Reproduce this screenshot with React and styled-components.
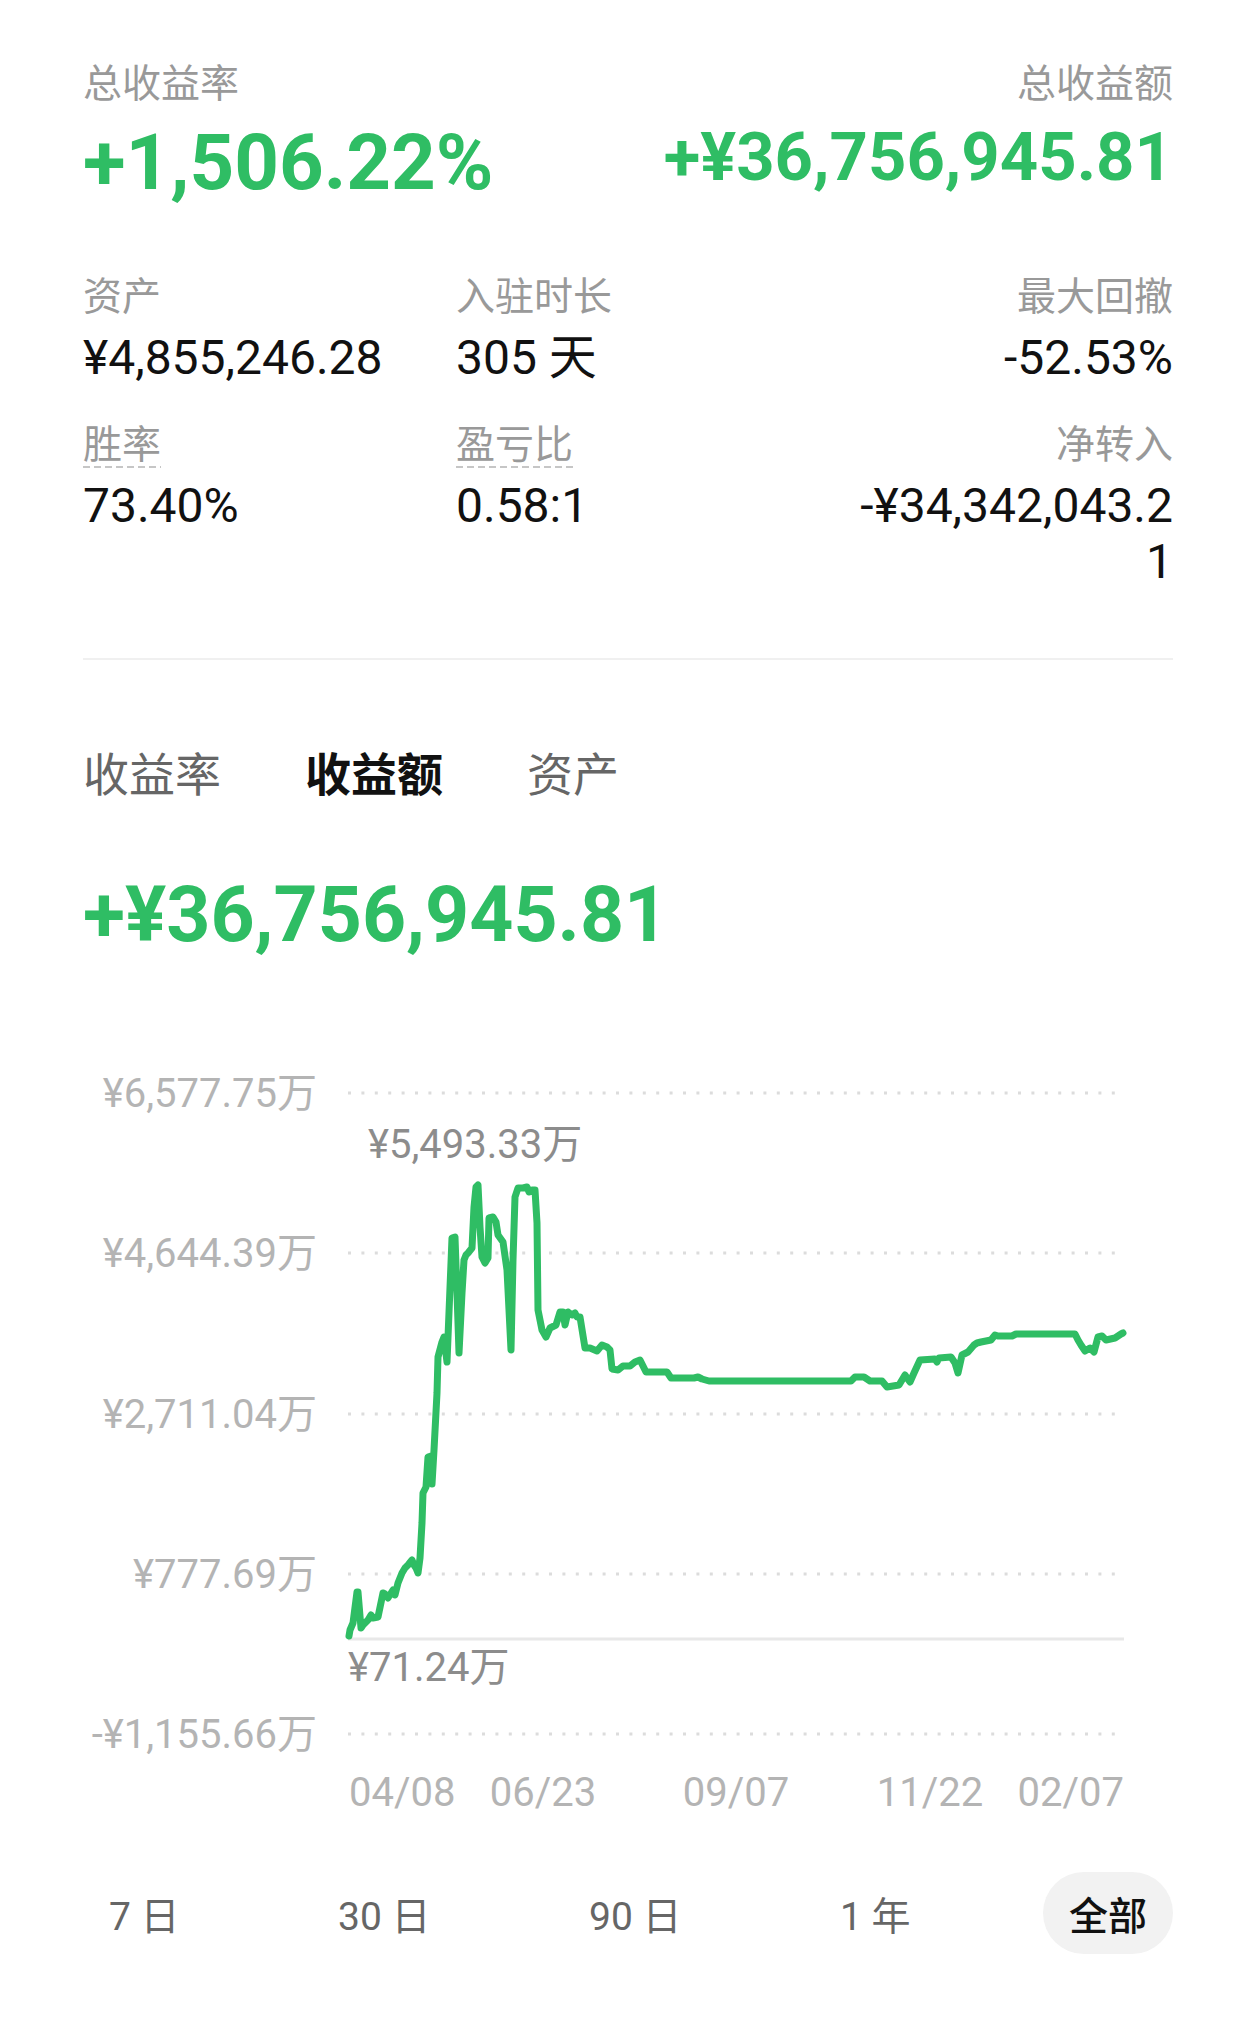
import styled, { createGlobalStyle } from "styled-components";

const GREEN = "#2fbd64";

const GlobalStyle = createGlobalStyle`
  html, body {
    margin: 0;
    padding: 0;
    background: #fff;
  }
  body {
    font-family: Roboto, "Noto Sans CJK SC", sans-serif;
    color: #111;
  }
`;

const Page = styled.div`
  width: 1256px;
  min-height: 2022px;
  box-sizing: border-box;
  padding: 61px 83px 0;
`;

const TopRow = styled.div`
  display: flex;
  justify-content: space-between;
`;

const SummaryBlock = styled.div`
  display: flex;
  flex-direction: column;
  align-items: ${({ $right }) => ($right ? "flex-end" : "flex-start")};
`;

const Label = styled.div`
  font-size: 39px;
  line-height: 46px;
  color: #999;
  white-space: nowrap;
`;

const BigValue = styled.div`
  margin-top: 11px;
  font-size: ${({ $size }) => $size}px;
  line-height: ${({ $lh }) => $lh}px;
  font-weight: 700;
  color: ${GREEN};
  white-space: nowrap;
`;

const StatsGrid = styled.div`
  margin-top: 66px;
  display: grid;
  grid-template-columns: 373px 1fr 325px;
  row-gap: 36px;
`;

const StatCell = styled.div`
  display: flex;
  flex-direction: column;
  align-items: ${({ $right }) => ($right ? "flex-end" : "flex-start")};
  text-align: ${({ $right }) => ($right ? "right" : "left")};
`;

const StatLabel = styled(Label)`
  ${({ $dashed }) =>
    $dashed &&
    `
    background-image: linear-gradient(to right, #c6c6c6 62%, transparent 0);
    background-size: 11px 2px;
    background-repeat: repeat-x;
    background-position: left bottom;
  `}
`;

const StatValue = styled.div`
  margin-top: 10px;
  font-size: 48px;
  line-height: 56px;
  color: #111;
  word-break: break-all;
`;

const Divider = styled.div`
  margin-top: 68px;
  height: 2px;
  background: #f0f0f0;
`;

const Tabs = styled.div`
  margin-top: 87px;
  display: flex;
  gap: 84px;
`;

const Tab = styled.div`
  font-size: 46px;
  line-height: 56px;
  color: ${({ $active }) => ($active ? "#111" : "#666")};
  font-weight: ${({ $active }) => ($active ? 700 : 400)};
`;

const ChartValue = styled(BigValue)`
  margin-top: 67px;
`;

const ChartSvg = styled.svg`
  display: block;
  margin-top: 80px;
  font-family: Roboto, "Noto Sans CJK SC", sans-serif;
`;

const RangeBar = styled.div`
  margin-top: 32px;
  display: flex;
  justify-content: space-between;
`;

const RangeItem = styled.div`
  height: 82px;
  padding: 0 26px;
  border-radius: 41px;
  display: flex;
  align-items: center;
  justify-content: center;
  font-size: 39px;
  white-space: nowrap;
  color: ${({ $active }) => ($active ? "#111" : "#666")};
  font-weight: ${({ $active }) => ($active ? 500 : 400)};
  background: ${({ $active }) => ($active ? "#f2f2f2" : "transparent")};
`;

const gridRows = [
  { y: 1093, label: "¥6,577.75万" },
  { y: 1253, label: "¥4,644.39万" },
  { y: 1414, label: "¥2,711.04万" },
  { y: 1574, label: "¥777.69万" },
  { y: 1734, label: "-¥1,155.66万" },
];

const xLabels = [
  { x: 349, text: "04/08", anchor: "start" },
  { x: 543, text: "06/23", anchor: "middle" },
  { x: 736, text: "09/07", anchor: "middle" },
  { x: 930, text: "11/22", anchor: "middle" },
  { x: 1124, text: "02/07", anchor: "end" },
];

const linePoints = [
  [349, 1636], [350, 1630], [353, 1623], [357, 1592], [358, 1592], [361, 1628],
  [363, 1625], [368, 1620], [371, 1615], [373, 1618], [378, 1617], [383, 1593],
  [385, 1594], [388, 1598], [393, 1590], [395, 1595], [398, 1583], [402, 1573],
  [405, 1568], [408, 1565], [412, 1560], [414, 1565], [416, 1568], [418, 1573],
  [420, 1558], [422, 1523], [423, 1493], [426, 1487], [428, 1457], [431, 1456],
  [432, 1484], [434, 1450], [437, 1393], [438, 1357], [442, 1342], [444, 1337],
  [447, 1362], [452, 1238], [455, 1237], [457, 1293], [459, 1353], [462, 1293],
  [464, 1260], [466, 1255], [468, 1253], [472, 1248], [474, 1207], [476, 1187],
  [478, 1185], [480, 1227], [482, 1257], [485, 1263], [488, 1258], [489, 1218],
  [493, 1217], [496, 1222], [498, 1235], [503, 1242], [507, 1270], [511, 1350],
  [513, 1260], [515, 1197], [518, 1188], [523, 1188], [527, 1187], [529, 1192],
  [532, 1190], [535, 1190], [537, 1223], [538, 1310], [542, 1330], [546, 1337],
  [550, 1328], [556, 1325], [560, 1312], [563, 1312], [565, 1325], [568, 1312],
  [572, 1315], [575, 1313], [577, 1317], [580, 1317], [585, 1348], [590, 1348],
  [597, 1351], [602, 1345], [607, 1347], [610, 1350], [612, 1369], [618, 1370],
  [623, 1366], [630, 1366], [635, 1362], [640, 1360], [643, 1366], [646, 1372],
  [667, 1372], [671, 1378], [694, 1378], [698, 1377], [702, 1379], [709, 1381],
  [851, 1381], [855, 1377], [864, 1377], [870, 1381], [882, 1381], [887, 1387],
  [899, 1385], [905, 1375], [910, 1382], [914, 1373], [920, 1360], [935, 1359],
  [937, 1362], [939, 1358], [951, 1357], [955, 1363], [958, 1373], [962, 1355],
  [968, 1352], [974, 1345], [977, 1343], [981, 1342], [991, 1340], [995, 1335],
  [998, 1336], [1012, 1336], [1016, 1334], [1075, 1334], [1078, 1340], [1081, 1345],
  [1085, 1351], [1090, 1348], [1094, 1352], [1098, 1337], [1102, 1336], [1106, 1340],
  [1115, 1338], [1121, 1334], [1123, 1333],
];

function ProfitChart() {
  return (
    <ChartSvg width="1090" height="800" viewBox="83 1040 1090 800">
      {gridRows.map((row) => (
        <g key={row.label}>
          <line
            x1="348"
            x2="1124"
            y1={row.y}
            y2={row.y}
            stroke="#dcdcdc"
            strokeWidth="3"
            strokeDasharray="3 10.4"
          />
          <text x="317" y={row.y + 14} fontSize="40" fill="#b4b4b4" textAnchor="end">
            {row.label}
          </text>
        </g>
      ))}
      <line x1="348" x2="1124" y1="1639" y2="1639" stroke="#e8e8e8" strokeWidth="3" />
      <polyline
        points={linePoints.map((p) => p.join(",")).join(" ")}
        fill="none"
        stroke={GREEN}
        strokeWidth="7"
        strokeLinejoin="round"
        strokeLinecap="round"
      />
      <text x="368" y="1158" fontSize="40" fill="#8c8c8c">
        ¥5,493.33万
      </text>
      <text x="348" y="1681" fontSize="40" fill="#8c8c8c">
        ¥71.24万
      </text>
      {xLabels.map((l) => (
        <text key={l.text} x={l.x} y="1806" fontSize="40" fill="#b4b4b4" textAnchor={l.anchor}>
          {l.text}
        </text>
      ))}
    </ChartSvg>
  );
}

const ranges = ["7 日", "30 日", "90 日", "1 年", "全部"];

export default function App() {
  return (
    <>
      <GlobalStyle />
      <Page>
        <TopRow>
          <SummaryBlock>
            <Label>总收益率</Label>
            <BigValue $size={78} $lh={90}>+1,506.22%</BigValue>
          </SummaryBlock>
          <SummaryBlock $right>
            <Label>总收益额</Label>
            <BigValue $size={67} $lh={78}>+¥36,756,945.81</BigValue>
          </SummaryBlock>
        </TopRow>

        <StatsGrid>
          <StatCell>
            <StatLabel>资产</StatLabel>
            <StatValue>¥4,855,246.28</StatValue>
          </StatCell>
          <StatCell>
            <StatLabel>入驻时长</StatLabel>
            <StatValue>305 天</StatValue>
          </StatCell>
          <StatCell $right>
            <StatLabel>最大回撤</StatLabel>
            <StatValue>-52.53%</StatValue>
          </StatCell>
          <StatCell>
            <StatLabel $dashed>胜率</StatLabel>
            <StatValue>73.40%</StatValue>
          </StatCell>
          <StatCell>
            <StatLabel $dashed>盈亏比</StatLabel>
            <StatValue>0.58:1</StatValue>
          </StatCell>
          <StatCell $right>
            <StatLabel>净转入</StatLabel>
            <StatValue>-¥34,342,043.21</StatValue>
          </StatCell>
        </StatsGrid>

        <Divider />

        <Tabs>
          <Tab>收益率</Tab>
          <Tab $active>收益额</Tab>
          <Tab>资产</Tab>
        </Tabs>

        <ChartValue $size={77} $lh={90}>+¥36,756,945.81</ChartValue>

        <ProfitChart />

        <RangeBar>
          {ranges.map((r) => (
            <RangeItem key={r} $active={r === "全部"}>
              {r}
            </RangeItem>
          ))}
        </RangeBar>
      </Page>
    </>
  );
}
